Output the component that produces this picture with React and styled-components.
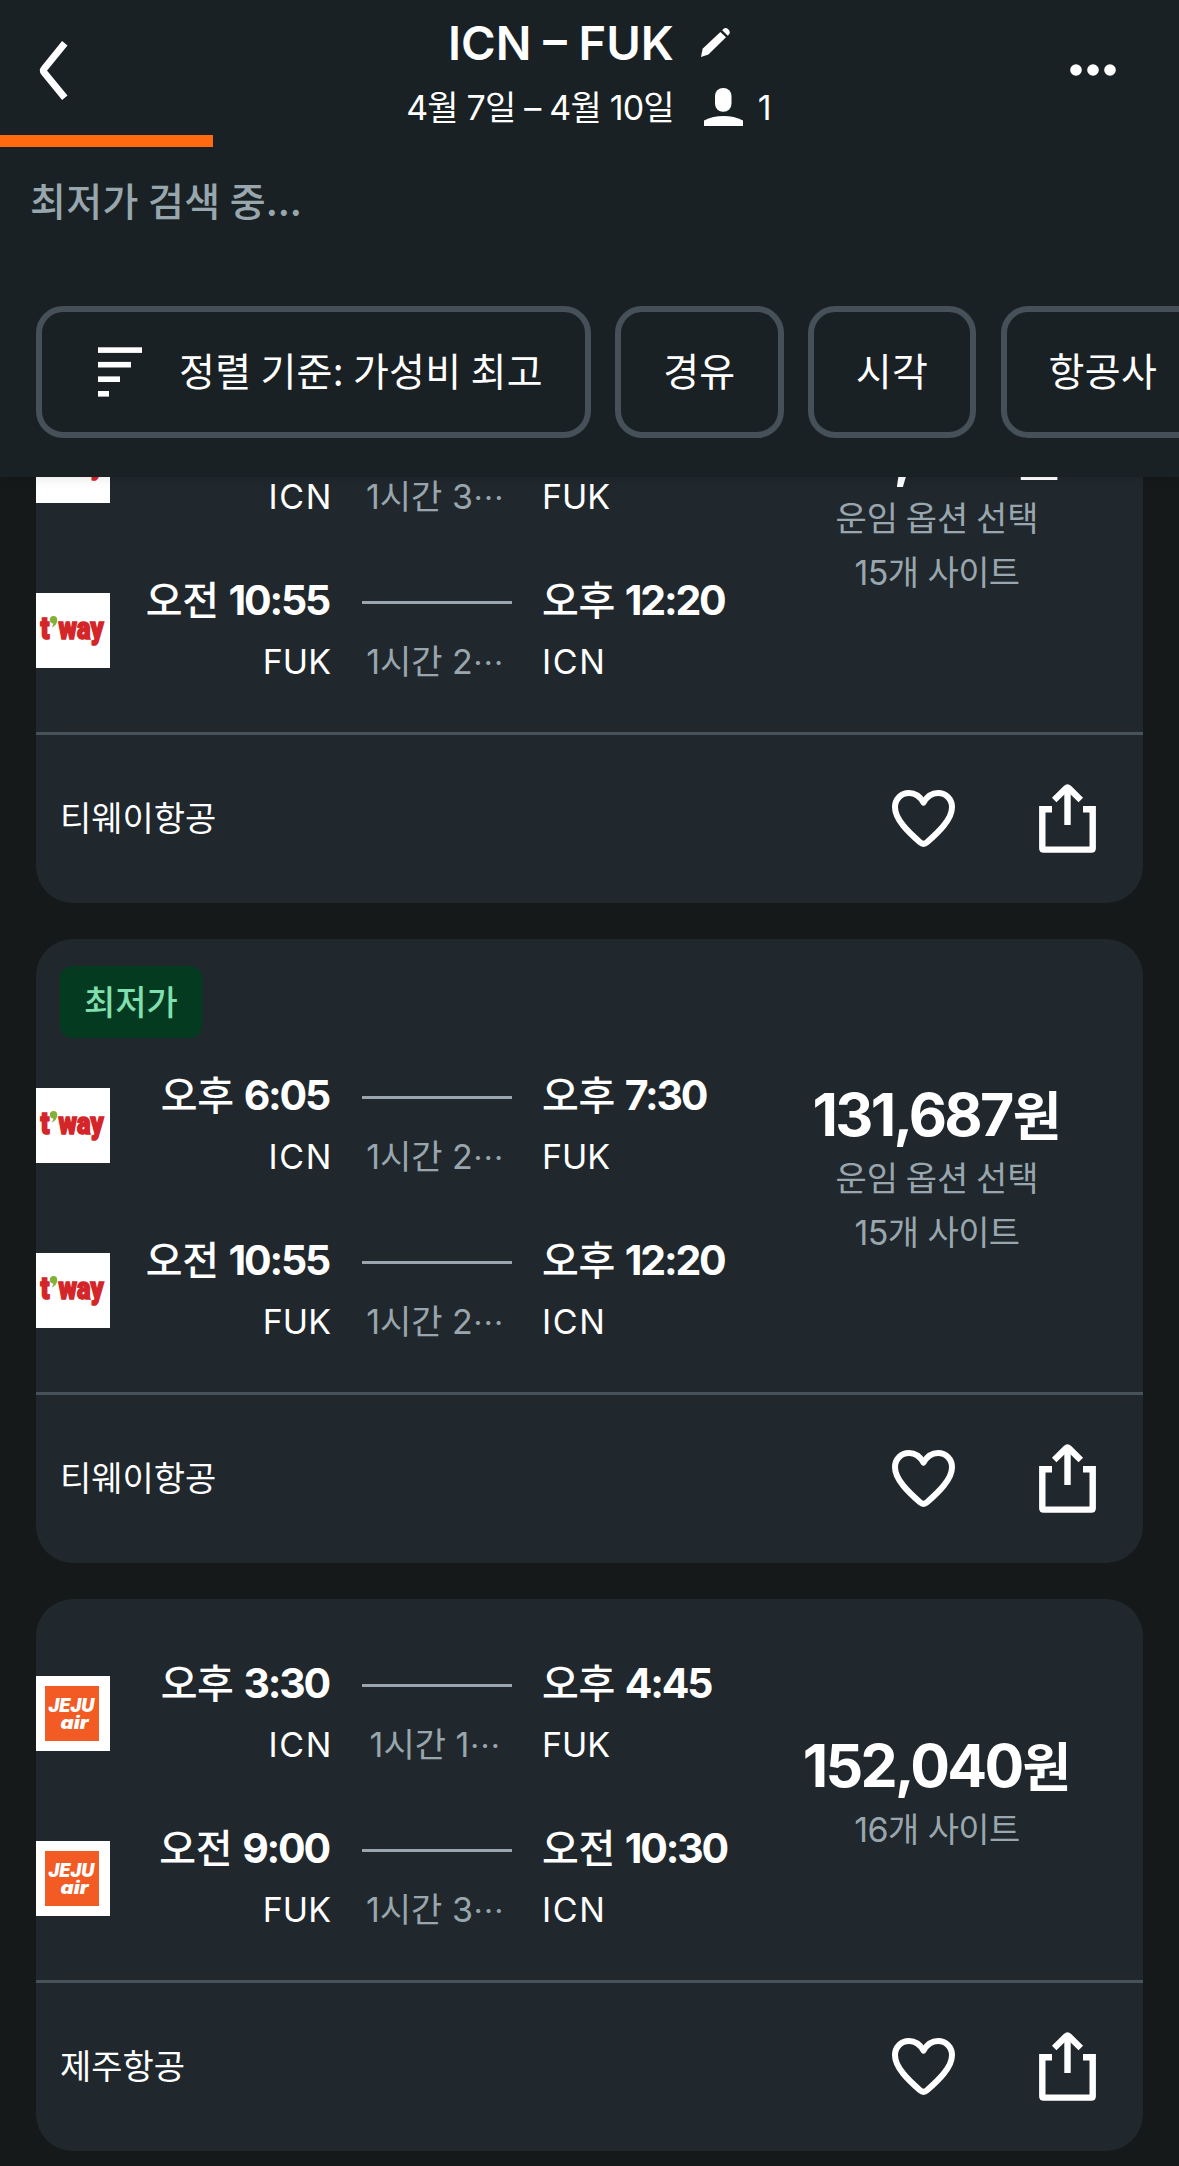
import React from "react";
import styled, { createGlobalStyle } from "styled-components";

const LATIN = `"Inter", "Noto Sans CJK KR", sans-serif`;
const KOREAN = `"Noto Sans CJK KR", "Inter", sans-serif`;

const GlobalStyle = createGlobalStyle`
  * {
    box-sizing: border-box;
  }
  body {
    margin: 0;
    background: #151919;
    color: #ffffff;
    font-family: ${LATIN};
  }
  button {
    padding: 0;
    border: 0;
    background: none;
    color: inherit;
    font: inherit;
  }
  svg {
    display: block;
    flex: none;
  }
`;

const results = [
  {
    id: 1,
    price: "131,687",
    fareOptions: true,
    sites: 15,
    airline: "티웨이항공",
    logo: "tway",
    slot: true,
    legs: [
      { dep: ["오후", "6:05"], from: "ICN", duration: "1시간 3", arr: ["오후", "7:35"], to: "FUK" },
      { dep: ["오전", "10:55"], from: "FUK", duration: "1시간 2", arr: ["오후", "12:20"], to: "ICN" },
    ],
  },
  {
    id: 2,
    badge: "최저가",
    price: "131,687",
    fareOptions: true,
    sites: 15,
    airline: "티웨이항공",
    logo: "tway",
    slot: true,
    legs: [
      { dep: ["오후", "6:05"], from: "ICN", duration: "1시간 2", arr: ["오후", "7:30"], to: "FUK" },
      { dep: ["오전", "10:55"], from: "FUK", duration: "1시간 2", arr: ["오후", "12:20"], to: "ICN" },
    ],
  },
  {
    id: 3,
    price: "152,040",
    sites: 16,
    airline: "제주항공",
    logo: "jeju",
    legs: [
      { dep: ["오후", "3:30"], from: "ICN", duration: "1시간 1", arr: ["오후", "4:45"], to: "FUK" },
      { dep: ["오전", "9:00"], from: "FUK", duration: "1시간 3", arr: ["오전", "10:30"], to: "ICN" },
    ],
  },
];

const BackIcon = () => (
  <svg width="29" height="59" viewBox="0 0 29 59" fill="none" stroke="#fff" strokeWidth="7">
    <path d="M25.8 2.3 L5.2 27.6 Q3.6 29.6 5.2 31.6 L25.8 56.7" />
  </svg>
);

const PencilIcon = () => (
  <svg width="29" height="30" viewBox="0 0 29 30" fill="#fff">
    <path d="M0 30 L1.6 21.8 L19.4 4.9 L25 10.3 L7.4 27.4 Z" />
    <path d="M21.2 3.2 L22.6 1.7 Q24.6 0 27 1.9 Q29.8 4.4 28.3 6.9 L26.8 8.7 Z" />
  </svg>
);

const PersonIcon = () => (
  <svg width="39" height="38" viewBox="0 0 39 38" fill="#fff">
    <rect x="11" y="0" width="16.5" height="23.8" rx="8" />
    <path d="M0 38 V32.4 Q9 28 19.5 28 Q30 28 39 32.4 V38 Z" />
  </svg>
);

const DotsIcon = () => (
  <svg width="46" height="12" viewBox="0 0 46 12" fill="#fff">
    <circle cx="6" cy="6" r="5.8" />
    <circle cx="23" cy="6" r="5.8" />
    <circle cx="40" cy="6" r="5.8" />
  </svg>
);

const SortIcon = () => (
  <svg width="44" height="50" viewBox="0 0 44 50" fill="#fff">
    <rect y="0.3" width="44" height="5.6" />
    <rect y="14.9" width="33" height="5.6" />
    <rect y="29.4" width="22" height="5.6" />
    <rect y="44" width="11" height="5.6" />
  </svg>
);

const HeartIcon = () => (
  <svg width="63" height="57" viewBox="0 0 63 57" fill="none" stroke="#fff" strokeWidth="6">
    <path
      strokeLinejoin="round"
      d="M31.5 12.6 C28 6.4 22.6 3 17 3 C9 3 3 9.2 3 17.2 C3 29.6 17 42.6 28 52.3 Q31.5 55.4 35 52.3 C46 42.6 60 29.6 60 17.2 C60 9.2 54 3 46 3 C40.4 3 35 6.4 31.5 12.6 Z"
    />
  </svg>
);

const ShareIcon = () => (
  <svg width="57" height="69" viewBox="0 0 57 69" fill="none" stroke="#fff" strokeWidth="6.4">
    <path d="M28.5 4 V41" />
    <path d="M15.2 16 L27 4.4 Q28.5 3 30 4.4 L41.8 16" />
    <path d="M13 25.2 H3.3 V64.2 Q3.3 65.6 4.7 65.6 H52.3 Q53.7 65.6 53.7 64.2 V25.2 H44" />
  </svg>
);

const TwayLogo = () => (
  <svg width="74" height="75" viewBox="0 0 74 75">
    <rect width="74" height="75" fill="#fff" />
    <g fill="#d42528" stroke="#d42528" strokeWidth="1.7" fontFamily="Roboto, sans-serif" fontWeight="900" fontSize="32">
      <text x="4.5" y="46.4" textLength="9" lengthAdjust="spacingAndGlyphs">t</text>
      <text x="22.6" y="46.4" textLength="45" lengthAdjust="spacingAndGlyphs">way</text>
    </g>
    <path d="M17.4 23 C20 23 21.4 24.6 21.2 27.2 C21 31 18.6 33.6 15.6 34.4 C16.8 33 17.4 31.8 17.2 30.6 C15 30.4 13.8 28.8 13.8 26.8 C13.8 24.6 15.4 23 17.4 23 Z" fill="#83b135" />
  </svg>
);

const JejuLogo = () => (
  <svg width="74" height="75" viewBox="0 0 74 75">
    <rect width="74" height="75" fill="#fff" />
    <rect x="9" y="10" width="54" height="55" fill="#f25c24" />
    <g fill="#fff" fontFamily="Inter, sans-serif" fontWeight="900" fontStyle="italic">
      <text x="12.4" y="36.2" fontSize="18.4" textLength="46" lengthAdjust="spacingAndGlyphs">JEJU</text>
      <text x="24.6" y="52.6" fontSize="18.4" textLength="28" lengthAdjust="spacingAndGlyphs">air</text>
    </g>
  </svg>
);

const logos = { tway: TwayLogo, jeju: JejuLogo };

const Leg = ({ leg, logo }) => {
  const Logo = logos[logo];
  return (
    <LegRow>
      <LogoBox>
        <Logo />
      </LogoBox>
      <Stop $right>
        <Time>
          <span>{leg.dep[0]}</span>
          {leg.dep[1]}
        </Time>
        <Code $right $loose={leg.from === "ICN"}>{leg.from}</Code>
      </Stop>
      <Path>
        <Track />
        <Duration>
          {leg.duration}
          <span>…</span>
        </Duration>
      </Path>
      <Stop>
        <Time>
          <span>{leg.arr[0]}</span>
          {leg.arr[1]}
        </Time>
        <Code $loose={leg.to === "ICN"}>{leg.to}</Code>
      </Stop>
    </LegRow>
  );
};

const FlightCard = ({ item }) => (
  <Card>
    <Body>
      <Trip $slot={item.slot}>
        {item.slot && <BadgeSlot>{item.badge && <Badge>{item.badge}</Badge>}</BadgeSlot>}
        <Legs>
          {item.legs.map((leg) => (
            <Leg key={leg.from} leg={leg} logo={item.logo} />
          ))}
        </Legs>
      </Trip>
      <Fare>
        <Price>
          {item.price}
          <span>원</span>
        </Price>
        {item.fareOptions && <FareNote $korean>운임 옵션 선택</FareNote>}
        <FareNote>{item.sites}개 사이트</FareNote>
      </Fare>
    </Body>
    <Footer>
      <Airline>{item.airline}</Airline>
      <IconButton aria-label="저장">
        <HeartIcon />
      </IconButton>
      <IconButton aria-label="공유">
        <ShareIcon />
      </IconButton>
    </Footer>
  </Card>
);

export default function App() {
  return (
    <Screen>
      <GlobalStyle />
      <Header>
        <TopBar>
          <BackButton aria-label="뒤로">
            <BackIcon />
          </BackButton>
          <Heading>
            <Title>
              ICN – FUK
              <PencilIcon />
            </Title>
            <Dates>
              4월 7일 – 4월 10일
              <PersonIcon />
              <em>1</em>
            </Dates>
          </Heading>
          <MoreButton aria-label="더보기">
            <DotsIcon />
          </MoreButton>
        </TopBar>
        <Progress>
          <Bar />
        </Progress>
        <Status>최저가 검색 중...</Status>
        <Filters>
          <Chip $sort>
            <SortIcon />
            <span>정렬 기준: 가성비 최고</span>
          </Chip>
          <Chip>
            <span>경유</span>
          </Chip>
          <Chip>
            <span>시각</span>
          </Chip>
          <Chip>
            <span>항공사</span>
          </Chip>
        </Filters>
      </Header>
      <Results>
        <List>
          {results.map((item) => (
            <FlightCard key={item.id} item={item} />
          ))}
        </List>
      </Results>
    </Screen>
  );
}

const Screen = styled.div`
  display: flex;
  flex-direction: column;
  width: 1179px;
  height: 2166px;
  overflow: hidden;
`;

const Header = styled.header`
  position: relative;
  z-index: 1;
  flex: none;
  height: 477px;
  background: #1a2124;
  box-shadow: 0 0 12px rgba(0, 0, 0, 0.12);
`;

const TopBar = styled.div`
  display: grid;
  grid-template-columns: 200px 1fr 200px;
  height: 135px;
`;

const BackButton = styled.button`
  justify-self: start;
  align-self: start;
  margin: 41px 0 0 39px;
`;

const MoreButton = styled.button`
  justify-self: end;
  align-self: start;
  margin: 64px 63px 0 0;
`;

const Heading = styled.div`
  display: flex;
  flex-direction: column;
  align-items: center;
  gap: 11px;
  padding-top: 13px;
`;

const Title = styled.div`
  display: flex;
  margin-right: 1px;
  font-size: 47px;
  font-weight: 600;
  line-height: 60px;
  svg {
    margin: 14px 0 0 27px;
  }
`;

const Dates = styled.div`
  display: flex;
  margin-right: 2px;
  font-size: 34px;
  line-height: 48px;
  letter-spacing: -0.8px;
  svg {
    margin: 4px 15px 0 30px;
  }
  em {
    font-style: normal;
  }
`;

const Progress = styled.div`
  height: 12px;
`;

const Bar = styled.div`
  width: 213px;
  height: 100%;
  background: #ff690f;
`;

const Status = styled.div`
  padding: 28px 0 0 30px;
  font-family: ${KOREAN};
  font-size: 39px;
  font-weight: 500;
  line-height: 48px;
  letter-spacing: 0.4px;
  color: #98a6ae;
`;

const Filters = styled.div`
  display: flex;
  gap: 24.3px;
  margin-top: 83px;
  padding-left: 36px;
  overflow: hidden;
`;

const Chip = styled.button`
  display: flex;
  flex: none;
  align-items: center;
  gap: 37px;
  height: 132px;
  padding: 0 42px 0 ${(p) => (p.$sort ? "56px" : "42px")};
  border: 6px solid #465058;
  border-radius: 27px;
  font-family: ${KOREAN};
  font-size: 39px;
  letter-spacing: 0.3px;
  white-space: nowrap;
  span {
    padding-bottom: 6px;
  }
`;

const Results = styled.main`
  flex: 1;
  min-height: 0;
  overflow: hidden;
`;

/* scrolled part of the way into the first card */
const List = styled.div`
  display: flex;
  flex-direction: column;
  gap: 36px;
  margin-top: -198px;
  padding: 0 36px;
`;

const Card = styled.article`
  border-radius: 37px;
  background: #20282d;
  overflow: hidden;
`;

const Body = styled.div`
  display: flex;
`;

const Trip = styled.div`
  flex: 1;
  padding: ${(p) => (p.$slot ? "27px" : "57px")} 0 44px;
`;

const BadgeSlot = styled.div`
  height: 72px;
  margin: 0 0 30px 24px;
`;

const Badge = styled.span`
  display: inline-block;
  height: 72px;
  padding: 0 24px;
  border-radius: 12px;
  background: #043b20;
  color: #80dfae;
  font-family: ${KOREAN};
  font-size: 34px;
  font-weight: 500;
  line-height: 69px;
`;

const Legs = styled.div`
  display: flex;
  flex-direction: column;
  gap: 50px;
`;

const LegRow = styled.div`
  display: grid;
  grid-template-columns: 74px 219px 33px 150px 30px 1fr;
  height: 115px;
`;

const LogoBox = styled.div`
  align-self: center;
`;

const Stop = styled.div`
  grid-column: ${(p) => (p.$right ? 2 : 6)};
  text-align: ${(p) => (p.$right ? "right" : "left")};
`;

const Time = styled.div`
  font-size: 41px;
  font-weight: 700;
  line-height: 55px;
  letter-spacing: -2.2px;
  white-space: nowrap;
  span {
    margin-right: 10px;
    font-family: ${KOREAN};
    font-size: 40px;
    font-weight: 500;
    line-height: 1;
    letter-spacing: -0.4px;
  }
`;

const Code = styled.div`
  margin: 13px ${(p) => (p.$right ? (p.$loose ? "-4px" : "-2px") : 0)} 0 0;
  font-size: 34px;
  line-height: 42px;
  letter-spacing: ${(p) => (p.$loose ? "1.6px" : 0)};
`;

const Path = styled.div`
  grid-column: 4;
`;

const Track = styled.div`
  height: 3px;
  margin-top: 28px;
  background: #99a6ae;
`;

const Duration = styled.div`
  margin: 37px 4px 0 0;
  font-size: 34px;
  line-height: 42px;
  text-align: center;
  white-space: nowrap;
  color: #99a6ae;
  span {
    font-family: ${KOREAN};
    font-size: 31px;
    line-height: 1;
  }
`;

const Fare = styled.div`
  display: flex;
  flex: none;
  flex-direction: column;
  align-items: center;
  justify-content: center;
  width: 412px;
`;

const Price = styled.div`
  height: 80px;
  font-size: 59px;
  font-weight: 700;
  line-height: 86px;
  letter-spacing: -2.7px;
  span {
    margin-left: 1px;
    font-family: ${KOREAN};
    font-size: 53px;
    font-weight: 700;
    line-height: 1;
    letter-spacing: 0;
  }
`;

const FareNote = styled.div`
  height: 54px;
  font-family: ${(p) => (p.$korean ? KOREAN : LATIN)};
  font-size: 34px;
  line-height: ${(p) => (p.$korean ? "49px" : "54px")};
  letter-spacing: ${(p) => (p.$korean ? 0 : "-0.6px")};
  color: #99a6ae;
`;

const Footer = styled.footer`
  display: flex;
  align-items: center;
  gap: 84px;
  height: 171px;
  padding: 0 47px 0 24px;
  border-top: 3px solid #46515a;
`;

const IconButton = styled.button`
  margin-bottom: 2px;
`;

const Airline = styled.div`
  flex: 1;
  padding-bottom: 5px;
  font-family: ${KOREAN};
  font-size: 34px;
`;
